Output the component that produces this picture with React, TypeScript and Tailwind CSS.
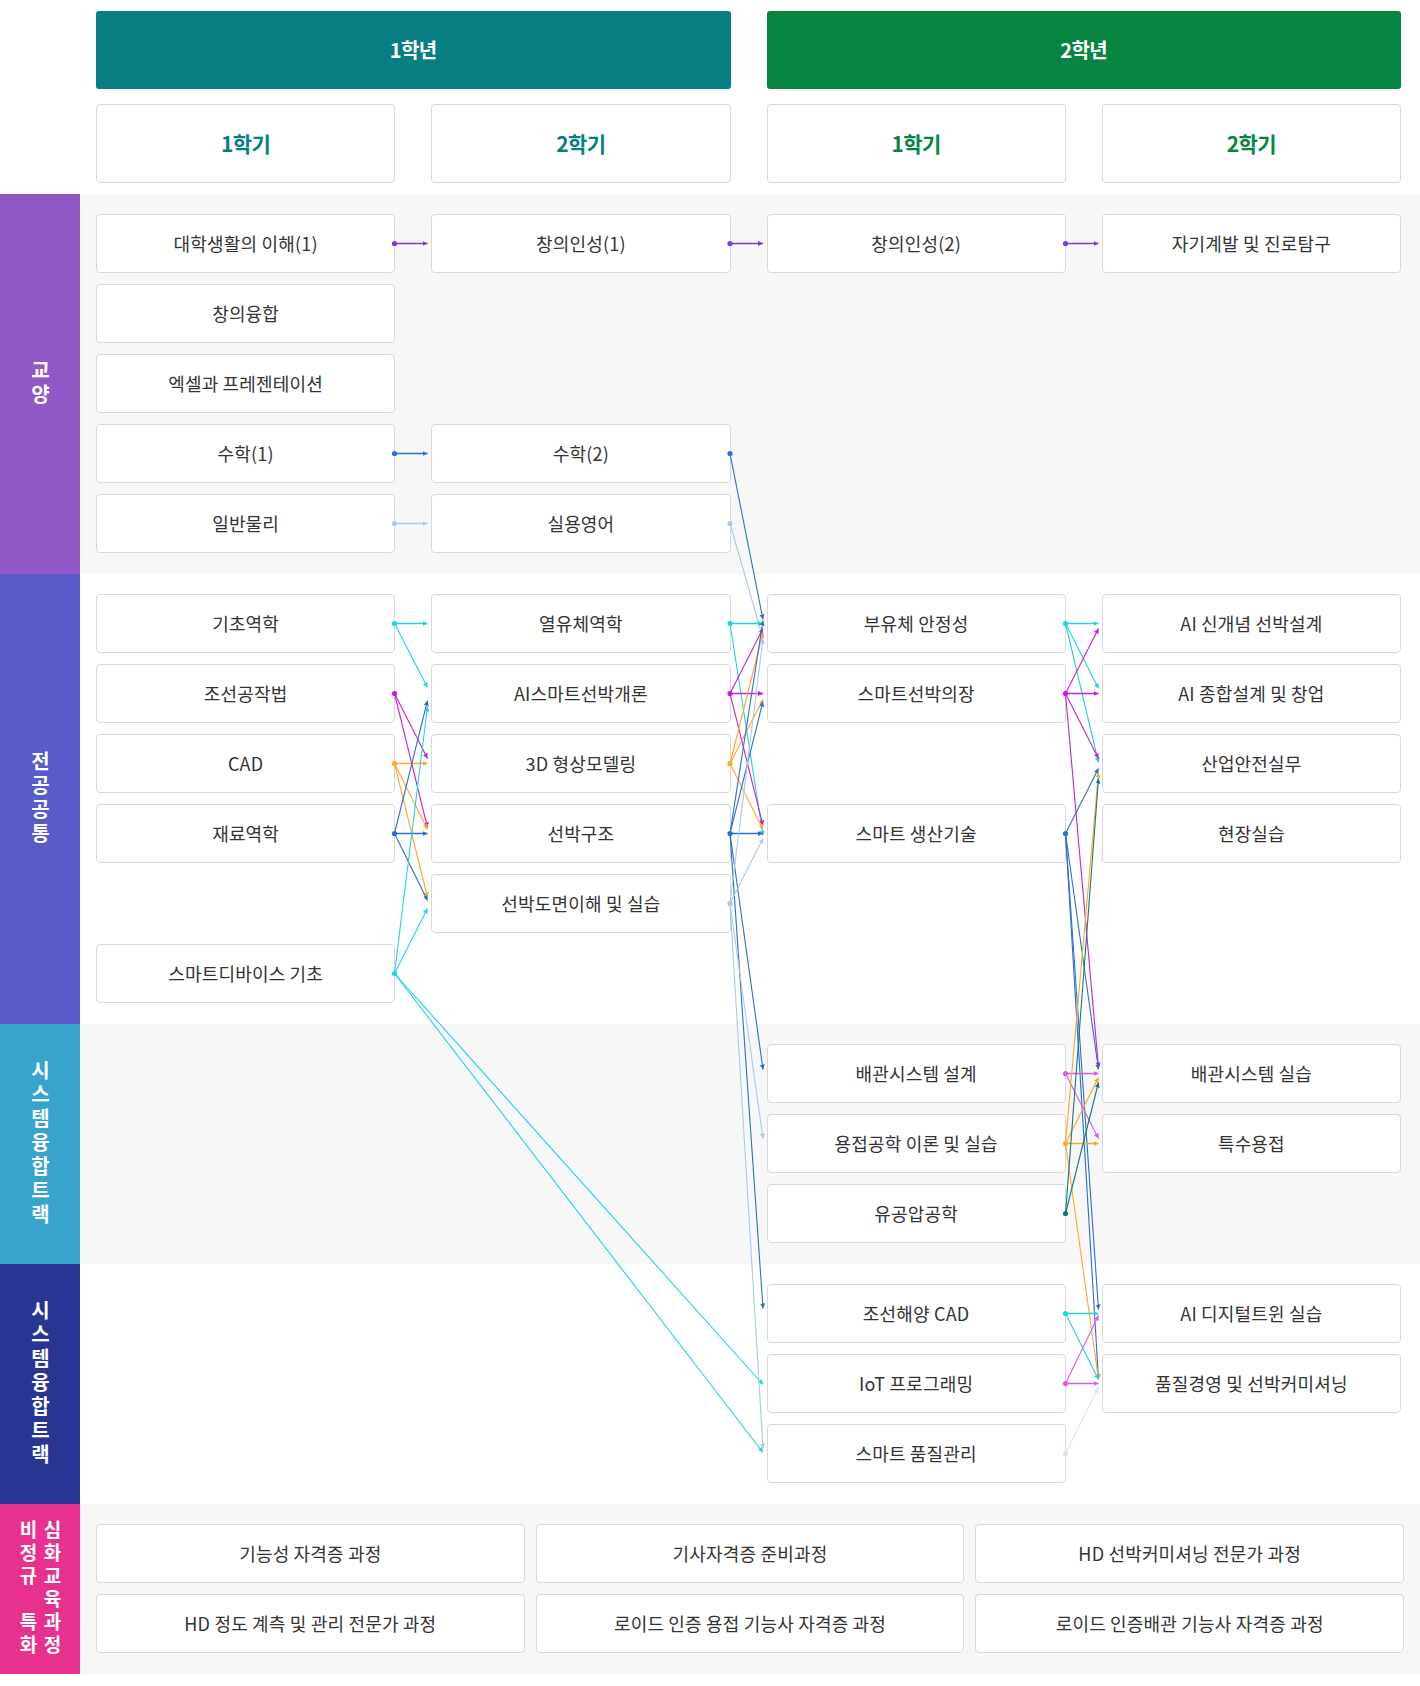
import React from "react";

const FONT = { fontFamily: '"Noto Sans CJK KR", "Noto Sans", sans-serif' };

type Item = { text: string; col: string; row: string };

const C = {
  purple: "#7a3dd4",
  blue: "#2c6ecf",
  light: "#a9c8ef",
  cyan: "#1fd3e3",
  magenta: "#c81ddb",
  orange: "#ffa726",
  teal: "#0f7a7d",
  orchid: "#d95ce8",
  faint: "#d8e4f5",
};

const G = (i: number) => 243.5 + 70 * i;
const M = (i: number) => 623.5 + 70 * i;
const T1 = (i: number) => 1073.5 + 70 * i;
const T2 = (i: number) => 1313.5 + 70 * i;

const SRC = [394.5, 730, 1065.5];
const DST = [0, 427.5, 763, 1098.5];

type Edge = [number, number, number, number, string];

const edges: Edge[] = [
  [0, G(0), 1, G(0), C.purple],
  [1, G(0), 2, G(0), C.purple],
  [2, G(0), 3, G(0), C.purple],
  [0, G(3), 1, G(3), C.blue],
  [0, G(4), 1, G(4), C.light],
  [1, G(3), 2, M(0) - 4, C.blue],
  [1, G(4), 2, M(0) + 15, C.light],
  [0, M(0), 1, M(0), C.cyan],
  [0, M(0), 1, M(1) - 6, C.cyan],
  [0, M(1), 1, M(2) - 5, C.magenta],
  [0, M(1), 1, M(3) - 6, C.magenta],
  [0, M(2), 1, M(2), C.orange],
  [0, M(2), 1, M(3) - 4, C.orange],
  [0, M(2), 1, M(4) - 6, C.orange],
  [0, M(3), 1, M(3), C.blue],
  [0, M(3), 1, M(1) + 7, C.blue],
  [0, M(3), 1, M(4) - 3, C.blue],
  [0, M(5), 1, M(1) + 13, C.cyan],
  [0, M(5), 1, M(4) + 5, C.cyan],
  [0, M(5), 2, T2(1) + 1, C.cyan],
  [0, M(5), 2, T2(2) - 1, C.cyan],
  [1, M(0), 2, M(0), C.cyan],
  [1, M(0), 2, M(3) + 2, C.cyan],
  [1, M(1), 2, M(0) + 5, C.magenta],
  [1, M(1), 2, M(1), C.magenta],
  [1, M(1), 2, M(3) - 8, C.magenta],
  [1, M(2), 2, M(0) + 9, C.orange],
  [1, M(2), 2, M(1) + 6, C.orange],
  [1, M(2), 2, M(3) - 4, C.orange],
  [1, M(3), 2, M(0) - 3, C.blue],
  [1, M(3), 2, M(1) + 8, C.blue],
  [1, M(3), 2, M(3), C.blue],
  [1, M(3), 2, T1(0) - 4, C.blue],
  [1, M(3), 2, T2(0) - 5, C.blue],
  [1, M(4), 2, M(0) + 15, C.light],
  [1, M(4), 2, M(3) + 5, C.light],
  [1, M(4), 2, T1(1) - 5, C.light],
  [1, M(4), 2, T2(2) - 5, C.light],
  [2, M(0), 3, M(0), C.cyan],
  [2, M(0), 3, M(1) - 5, C.cyan],
  [2, M(0), 3, M(2) - 1, C.cyan],
  [2, M(1), 3, M(0) + 5, C.magenta],
  [2, M(1), 3, M(1), C.magenta],
  [2, M(1), 3, M(2) - 5, C.magenta],
  [2, M(1), 3, T1(0) - 6, C.magenta],
  [2, M(3), 3, M(2) + 5, C.blue],
  [2, M(3), 3, T1(0) - 4, C.blue],
  [2, M(3), 3, T2(0) - 4, C.blue],
  [2, M(3), 3, T2(1) - 4, C.blue],
  [2, T1(0), 3, T1(0), C.orchid],
  [2, T1(0), 3, T1(1) - 5, C.orchid],
  [2, T1(1), 3, T1(1), C.orange],
  [2, T1(1), 3, T1(0) + 4, C.orange],
  [2, T1(1), 3, T2(1) - 4, C.orange],
  [2, T1(1), 3, M(2) + 9, C.orange],
  [2, T1(2), 3, T1(0) + 9, C.teal],
  [2, T1(2), 3, M(2) + 15, C.teal],
  [2, T2(0), 3, T2(0), C.cyan],
  [2, T2(0), 3, T2(1) - 4, C.cyan],
  [2, T2(1), 3, T2(1), C.orchid],
  [2, T2(1), 3, T2(0) + 2, C.orchid],
  [2, T2(2), 3, T2(1) + 4, C.faint],
];

const colorIds: Record<string, string> = {};
Object.entries(C).forEach(([k, v]) => (colorIds[v] = k));

function Connectors() {
  const dots = new Map<string, [number, number, string]>();
  edges.forEach(([fc, fy, , , col]) => {
    const key = `${fc}-${fy}`;
    if (!dots.has(key)) dots.set(key, [SRC[fc], fy, col]);
  });
  return (
    <svg
      className="absolute left-0 top-0 pointer-events-none"
      width={1420}
      height={1686}
      viewBox="0 0 1420 1686"
    >
      <defs>
        {Object.entries(C).map(([k, v]) => (
          <marker
            key={k}
            id={`ah-${k}`}
            markerUnits="userSpaceOnUse"
            markerWidth={6}
            markerHeight={6}
            refX={5}
            refY={2.5}
            orient="auto"
          >
            <path d="M0,0 L5,2.5 L0,5 z" fill={v} />
          </marker>
        ))}
      </defs>
      {edges.map(([fc, fy, tc, ty, col], i) => {
        const straight = Math.abs(fy - ty) < 0.5;
        return (
          <line
            key={i}
            x1={SRC[fc]}
            y1={fy}
            x2={DST[tc]}
            y2={ty}
            stroke={col}
            strokeWidth={straight ? 1.5 : 1.1}
            markerEnd={`url(#ah-${colorIds[col]})`}
          />
        );
      })}
      {[...dots.values()].map(([x, y, col], i) => (
        <circle key={i} cx={x} cy={y} r={2.6} fill={col} />
      ))}
    </svg>
  );
}

function Box({ item }: { item: Item }) {
  return (
    <div
      className={`${item.col} ${item.row} flex items-center justify-center rounded-[4px] border border-[#d9d9d9] bg-white text-[18px] tracking-[0.01em] text-[#333333]`}
    >
      {item.text}
    </div>
  );
}

function Label({ text, bg }: { text: string; bg: string }) {
  return (
    <div className={`w-[80px] shrink-0 ${bg} flex items-center justify-center`}>
      <div className="[writing-mode:vertical-rl] [text-orientation:upright] text-[20px] font-bold leading-[24px] tracking-[4px] text-white">
        {text}
      </div>
    </div>
  );
}

function Section({
  label,
  bg,
  items,
}: {
  label: React.ReactNode;
  bg: string;
  items: Item[];
}) {
  return (
    <div className="flex">
      {label}
      <div className={`flex-1 ${bg} pl-[16px] pr-[19px] pt-[20px] pb-[21px]`}>
        <div className="grid grid-cols-4 auto-rows-[59px] gap-x-[36px] gap-y-[11px]">
          {items.map((it, i) => (
            <Box key={i} item={it} />
          ))}
        </div>
      </div>
    </div>
  );
}

const gyoyang: Item[] = [
  { text: "대학생활의 이해(1)", col: "col-start-1", row: "row-start-1" },
  { text: "창의융합", col: "col-start-1", row: "row-start-2" },
  { text: "엑셀과 프레젠테이션", col: "col-start-1", row: "row-start-3" },
  { text: "수학(1)", col: "col-start-1", row: "row-start-4" },
  { text: "일반물리", col: "col-start-1", row: "row-start-5" },
  { text: "창의인성(1)", col: "col-start-2", row: "row-start-1" },
  { text: "수학(2)", col: "col-start-2", row: "row-start-4" },
  { text: "실용영어", col: "col-start-2", row: "row-start-5" },
  { text: "창의인성(2)", col: "col-start-3", row: "row-start-1" },
  { text: "자기계발 및 진로탐구", col: "col-start-4", row: "row-start-1" },
];

const major: Item[] = [
  { text: "기초역학", col: "col-start-1", row: "row-start-1" },
  { text: "조선공작법", col: "col-start-1", row: "row-start-2" },
  { text: "CAD", col: "col-start-1", row: "row-start-3" },
  { text: "재료역학", col: "col-start-1", row: "row-start-4" },
  { text: "스마트디바이스 기초", col: "col-start-1", row: "row-start-6" },
  { text: "열유체역학", col: "col-start-2", row: "row-start-1" },
  { text: "AI스마트선박개론", col: "col-start-2", row: "row-start-2" },
  { text: "3D 형상모델링", col: "col-start-2", row: "row-start-3" },
  { text: "선박구조", col: "col-start-2", row: "row-start-4" },
  { text: "선박도면이해 및 실습", col: "col-start-2", row: "row-start-5" },
  { text: "부유체 안정성", col: "col-start-3", row: "row-start-1" },
  { text: "스마트선박의장", col: "col-start-3", row: "row-start-2" },
  { text: "스마트 생산기술", col: "col-start-3", row: "row-start-4" },
  { text: "AI 신개념 선박설계", col: "col-start-4", row: "row-start-1" },
  { text: "AI 종합설계 및 창업", col: "col-start-4", row: "row-start-2" },
  { text: "산업안전실무", col: "col-start-4", row: "row-start-3" },
  { text: "현장실습", col: "col-start-4", row: "row-start-4" },
];

const track1: Item[] = [
  { text: "배관시스템 설계", col: "col-start-3", row: "row-start-1" },
  { text: "용접공학 이론 및 실습", col: "col-start-3", row: "row-start-2" },
  { text: "유공압공학", col: "col-start-3", row: "row-start-3" },
  { text: "배관시스템 실습", col: "col-start-4", row: "row-start-1" },
  { text: "특수용접", col: "col-start-4", row: "row-start-2" },
];

const track2: Item[] = [
  { text: "조선해양 CAD", col: "col-start-3", row: "row-start-1" },
  { text: "IoT 프로그래밍", col: "col-start-3", row: "row-start-2" },
  { text: "스마트 품질관리", col: "col-start-3", row: "row-start-3" },
  { text: "AI 디지털트윈 실습", col: "col-start-4", row: "row-start-1" },
  { text: "품질경영 및 선박커미셔닝", col: "col-start-4", row: "row-start-2" },
];

const special = [
  "기능성 자격증 과정",
  "기사자격증 준비과정",
  "HD 선박커미셔닝 전문가 과정",
  "HD 정도 계측 및 관리 전문가 과정",
  "로이드 인증 용접 기능사 자격증 과정",
  "로이드 인증배관 기능사 자격증 과정",
];

export default function App() {
  return (
    <div className="relative w-[1420px] bg-white pt-[11px] pb-[12px]" style={FONT}>
      {/* header */}
      <div className="flex">
        <div className="w-[80px] shrink-0" />
        <div className="flex-1 pl-[16px] pr-[19px]">
          <div className="grid grid-cols-4 gap-x-[36px]">
            <div className="col-span-2 h-[78px] rounded-[3px] bg-[#067e82] flex items-center justify-center text-[20px] font-bold text-white tracking-[-0.03em]">
              1학년
            </div>
            <div className="col-span-2 h-[78px] rounded-[3px] bg-[#078540] flex items-center justify-center text-[20px] font-bold text-white tracking-[-0.03em]">
              2학년
            </div>
            {["1학기", "2학기", "1학기", "2학기"].map((s, i) => (
              <div
                key={i}
                className={`mt-[15px] h-[79px] rounded-[4px] border border-[#d9d9d9] bg-white flex items-center justify-center text-[21px] font-bold tracking-[-0.03em] ${
                  i < 2 ? "text-[#067e82]" : "text-[#078540]"
                }`}
              >
                {s}
              </div>
            ))}
          </div>
        </div>
      </div>
      <div className="h-[11px]" />

      <Section label={<Label text="교양" bg="bg-[#9157c7]" />} bg="bg-[#f7f7f7]" items={gyoyang} />
      <Section label={<Label text="전공공통" bg="bg-[#5a5bc6]" />} bg="bg-white" items={major} />
      <Section label={<Label text="시스템융합트랙" bg="bg-[#38a3cc]" />} bg="bg-[#f7f7f7]" items={track1} />
      <Section label={<Label text="시스템융합트랙" bg="bg-[#293592]" />} bg="bg-white" items={track2} />

      {/* special */}
      <div className="flex">
        <div className="w-[80px] shrink-0 bg-[#e8318f] flex items-center justify-center">
          <div className="[writing-mode:vertical-rl] [text-orientation:upright] text-[19px] font-bold leading-[24px] tracking-[4px] text-white">
            심화교육과정
            <br />
            비정규{"\u3000"}특화
          </div>
        </div>
        <div className="flex-1 bg-[#f7f7f7] px-[16px] pt-[20px] pb-[21px]">
          <div className="grid grid-cols-3 auto-rows-[59px] gap-x-[11px] gap-y-[11px]">
            {special.map((s, i) => (
              <div
                key={i}
                className="flex items-center justify-center rounded-[4px] border border-[#d9d9d9] bg-white text-[18px] tracking-[0.01em] text-[#333333]"
              >
                {s}
              </div>
            ))}
          </div>
        </div>
      </div>

      <Connectors />
    </div>
  );
}
